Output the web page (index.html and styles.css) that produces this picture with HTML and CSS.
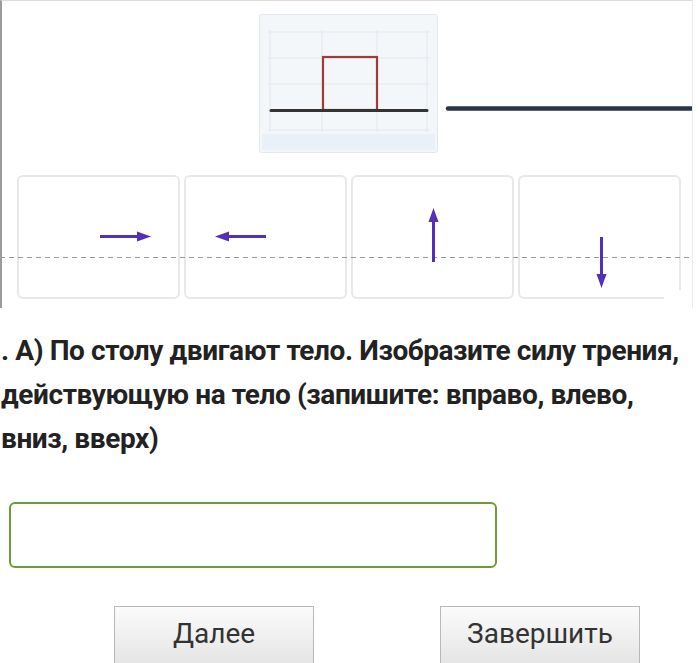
FILE: index.html
```html
<!DOCTYPE html>
<html lang="ru">
<head>
<meta charset="utf-8">
<title>Задание</title>
<link rel="stylesheet" href="styles.css">
</head>
<body>
<div class="task">
  <div class="picture">
    <svg class="picture-svg" width="693" height="308" viewBox="0 0 693 308">
      <!-- diagram: body on a table -->
      <rect x="259.5" y="14.5" width="178" height="138" rx="2" fill="#f4f7fa" stroke="#e2e8ef"/>
      <rect x="262" y="134" width="173" height="16" fill="#e9f0f7"/>
      <g stroke="#e3e7ec" stroke-width="1">
        <line x1="270" y1="30" x2="270" y2="132"/>
        <line x1="322" y1="30" x2="322" y2="132"/>
        <line x1="377" y1="30" x2="377" y2="132"/>
        <line x1="427" y1="30" x2="427" y2="132"/>
        <line x1="268" y1="32" x2="430" y2="32"/>
        <line x1="268" y1="58" x2="430" y2="58"/>
        <line x1="268" y1="84" x2="430" y2="84"/>
        <line x1="268" y1="130" x2="430" y2="130"/>
      </g>
      <rect x="323" y="57" width="54" height="53" fill="none" stroke="#9e3b3b" stroke-width="2.2"/>
      <line x1="271" y1="110.5" x2="427" y2="110.5" stroke="#333" stroke-width="3" stroke-linecap="round"/>
      <line x1="448" y1="108.5" x2="693" y2="108.5" stroke="#263644" stroke-width="4.5" stroke-linecap="round"/>

      <!-- answer cards -->
      <g fill="#fff" stroke="#e8e8e8" stroke-width="2">
        <rect x="18" y="176" width="161" height="122" rx="5"/>
        <rect x="185" y="176" width="161" height="122" rx="5"/>
        <rect x="352" y="176" width="161" height="122" rx="5"/>
        <rect x="519" y="176" width="161" height="122" rx="5"/>
      </g>
      <rect x="664" y="290" width="20" height="12" fill="#fff"/>

      <line x1="0" y1="257.5" x2="693" y2="257.5" stroke="#9a9a9a" stroke-width="1" stroke-dasharray="5 4"/>

      <!-- force arrows -->
      <g fill="#5230b8" stroke="#5230b8">
        <line x1="100" y1="236.5" x2="140" y2="236.5" stroke-width="3"/>
        <path d="M137 231.5 L151 236.5 L137 241.5 Z" stroke="none"/>
        <line x1="226" y1="236.5" x2="266" y2="236.5" stroke-width="3"/>
        <path d="M229 231.5 L215 236.5 L229 241.5 Z" stroke="none"/>
        <line x1="433.5" y1="220" x2="433.5" y2="262" stroke-width="3"/>
        <path d="M428.5 222 L433.5 208 L438.5 222 Z" stroke="none"/>
        <line x1="601.5" y1="237" x2="601.5" y2="277" stroke-width="3"/>
        <path d="M596.5 274 L601.5 288 L606.5 274 Z" stroke="none"/>
      </g>
    </svg>
  </div>

  <p class="question">. А) По столу двигают тело. Изобразите силу трения, действующую на тело (запишите: вправо, влево, вниз, вверх)</p>

  <input class="answer" type="text">

  <div class="actions">
    <button class="btn btn-next" type="button">Далее</button>
    <button class="btn btn-finish" type="button">Завершить</button>
  </div>
</div>
</body>
</html>
```
FILE: styles.css
```css
html, body {
  margin: 0;
  padding: 0;
  background: #fff;
  overflow: hidden;
}

.task {
  width: 700px;
  height: 663px;
  font-family: Roboto, "Liberation Sans", sans-serif;
  color: #222;
}

.picture {
  width: 693px;
  height: 308px;
  box-sizing: border-box;
  border-left: 2px solid #9b9b9b;
  border-top: 1px solid #dcdcdc;
  border-right: 1px solid #ececec;
  overflow: hidden;
}

.picture-svg {
  display: block;
  margin: -1px 0 0 -2px;
}

.question {
  margin: 21px 0 0 1px;
  width: 699px;
  font-size: 28px;
  font-weight: 700;
  line-height: 44px;
  letter-spacing: -0.4px;
  color: #222;
}

.answer {
  display: block;
  box-sizing: border-box;
  margin: 41px 0 0 9px;
  width: 488px;
  height: 66px;
  border: 2px solid #6e9b37;
  border-radius: 6px;
  background: #fff;
  outline: none;
}

.actions {
  display: flex;
  margin: 38px 0 0 114px;
  gap: 126px;
}

.btn {
  box-sizing: border-box;
  width: 200px;
  height: 60px;
  padding: 0 0 6px;
  border: 1px solid #b8b8b8;
  border-radius: 0;
  background: linear-gradient(#fbfbfb, #e4e4e4);
  font-family: Roboto, "Liberation Sans", sans-serif;
  font-size: 28px;
  color: #333;
}
```
